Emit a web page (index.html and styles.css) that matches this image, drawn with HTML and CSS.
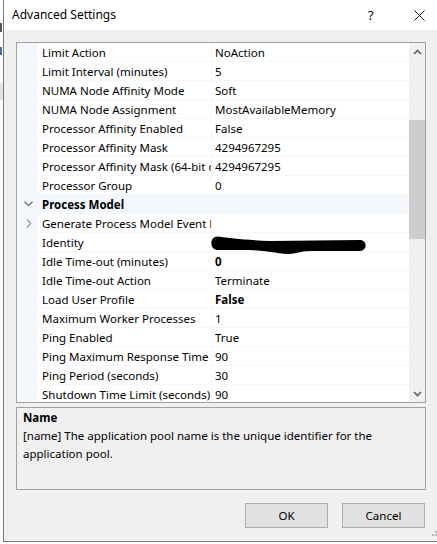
FILE: index.html
```html
<!DOCTYPE html>
<html>
<head>
<meta charset="utf-8">
<link rel="stylesheet" href="styles.css">
</head>
<body>
<div class="page">
  <div class="behind">
    <div class="frag frag-s"></div>
    <div class="frag frag-w"></div>
    <div class="frag frag-bar"></div>
  </div>
  <div class="dialog">
    <div class="titlebar">
      <div class="title">Advanced Settings</div>
      <div class="help">?</div>
      <div class="close">
        <svg width="11" height="11" viewBox="0 0 11 11"><path d="M0.5 0.5 L10.5 10.5 M10.5 0.5 L0.5 10.5" stroke="#111" stroke-width="1" fill="none"/></svg>
      </div>
    </div>
    <div class="content">
      <div class="grid">
        <div class="rows">
          <div class="row"><div class="margin"></div><div class="name">Limit Action</div><div class="value">NoAction</div></div>
          <div class="row"><div class="margin"></div><div class="name">Limit Interval (minutes)</div><div class="value">5</div></div>
          <div class="row"><div class="margin"></div><div class="name">NUMA Node Affinity Mode</div><div class="value">Soft</div></div>
          <div class="row"><div class="margin"></div><div class="name">NUMA Node Assignment</div><div class="value">MostAvailableMemory</div></div>
          <div class="row"><div class="margin"></div><div class="name">Processor Affinity Enabled</div><div class="value">False</div></div>
          <div class="row"><div class="margin"></div><div class="name">Processor Affinity Mask</div><div class="value">4294967295</div></div>
          <div class="row"><div class="margin"></div><div class="name">Processor Affinity Mask (64-bit option)</div><div class="value">4294967295</div></div>
          <div class="row"><div class="margin"></div><div class="name">Processor Group</div><div class="value">0</div></div>
          <div class="row category"><div class="margin">
            <svg width="9" height="6" viewBox="0 0 9 6"><path d="M0.5 0.8 L4.5 4.6 L8.5 0.8" stroke="#707070" stroke-width="1.3" fill="none"/></svg>
          </div><div class="cat-name">Process Model</div></div>
          <div class="row"><div class="margin">
            <svg width="6" height="9" viewBox="0 0 6 9"><path d="M1 0.5 L4.6 4.5 L1 8.5" stroke="#9a9a9a" stroke-width="1.3" fill="none"/></svg>
          </div><div class="name">Generate Process Model Event Log Entry</div><div class="value"></div></div>
          <div class="row"><div class="margin"></div><div class="name">Identity</div><div class="value identity">
            <svg class="scribble" width="158" height="20" viewBox="0 0 158 20"><path d="M8 0.5 C20 2 35 4 60 5 L150 4 C157 4 158 14 150 15 L100 15 C90 15 86 18 79 18 C70 18 60 15 40 14 L9 14 C-1 15 -1 0 8 0.5 Z" fill="#000"/></svg>
          </div></div>
          <div class="row"><div class="margin"></div><div class="name">Idle Time-out (minutes)</div><div class="value bold">0</div></div>
          <div class="row"><div class="margin"></div><div class="name">Idle Time-out Action</div><div class="value">Terminate</div></div>
          <div class="row"><div class="margin"></div><div class="name">Load User Profile</div><div class="value bold">False</div></div>
          <div class="row"><div class="margin"></div><div class="name">Maximum Worker Processes</div><div class="value">1</div></div>
          <div class="row"><div class="margin"></div><div class="name">Ping Enabled</div><div class="value">True</div></div>
          <div class="row"><div class="margin"></div><div class="name">Ping Maximum Response Time (seconds)</div><div class="value">90</div></div>
          <div class="row"><div class="margin"></div><div class="name">Ping Period (seconds)</div><div class="value">30</div></div>
          <div class="row"><div class="margin"></div><div class="name">Shutdown Time Limit (seconds)</div><div class="value">90</div></div>
        </div>
        <div class="scrollbar">
          <div class="sb-btn">
            <svg width="9" height="6" viewBox="0 0 9 6"><path d="M1 5 L4.5 1.5 L8 5" stroke="#606060" stroke-width="1.6" fill="none"/></svg>
          </div>
          <div class="thumb"></div>
          <div class="sb-fill"></div>
          <div class="sb-btn">
            <svg width="9" height="6" viewBox="0 0 9 6"><path d="M1 1 L4.5 4.5 L8 1" stroke="#606060" stroke-width="1.6" fill="none"/></svg>
          </div>
        </div>
      </div>
      <div class="desc">
        <div class="desc-title">Name</div>
        <div class="desc-text">[name] The application pool name is the unique identifier for the application pool.</div>
      </div>
      <div class="buttons">
        <button class="btn">OK</button>
        <button class="btn">Cancel</button>
      </div>
    </div>
    <div class="grip">
      <svg width="8" height="8" viewBox="0 0 8 8" fill="#b8b8b8"><rect x="6" y="0" width="2" height="2"/><rect x="3" y="3" width="2" height="2"/><rect x="6" y="3" width="2" height="2"/><rect x="0" y="6" width="2" height="2"/><rect x="3" y="6" width="2" height="2"/><rect x="6" y="6" width="2" height="2"/></svg>
    </div>
  </div>
</div>
</body>
</html>
```

FILE: styles.css
```css
html, body {
  margin: 0;
  padding: 0;
  background: #ffffff;
  overflow: hidden;
}
body {
  width: 437px;
  height: 544px;
  font-family: "Noto Sans", "Open Sans", sans-serif;
  font-size: 11.5px;
  color: #000;
}
.page {
  display: flex;
  width: 437px;
  height: 544px;
}
.behind {
  width: 3px;
  flex: none;
  display: flex;
  flex-direction: column;
  background: #fff;
}
.frag-s {
  margin-top: 23px;
  height: 9px;
  width: 2px;
  background: #555;
}
.frag-w {
  margin-top: 15px;
  height: 8px;
  width: 2px;
  background: #4a6da8;
}
.frag-bar {
  margin-top: 28px;
  height: 17px;
  width: 3px;
  background: #e3e3e3;
}
.dialog {
  position: relative;
  width: 440px;
  flex: none;
  height: 541px;
  border-left: 1px solid #7a7a7a;
  border-bottom: 1px solid #7a7a7a;
  background: #f0f0f0;
  display: flex;
  flex-direction: column;
}
.titlebar {
  height: 30px;
  background: #fff;
  display: flex;
  align-items: center;
  flex: none;
}
.title {
  padding-left: 8px;
  font-size: 12px;
  flex: 1;
  line-height: 30px;
}
.help {
  width: 10px;
  font-size: 13px;
  margin-right: 36px;
  line-height: 30px;
}
.close {
  width: 30px;
  display: flex;
  align-items: center;
  padding-top: 1px;
}
.content {
  padding: 12px 0 0 12px;
  display: flex;
  flex-direction: column;
}
.grid {
  width: 408px;
  height: 359px;
  border: 1px solid #a0a0a0;
  background: #fff;
  display: flex;
  overflow: hidden;
}
.rows {
  width: 392px;
  display: flex;
  flex-direction: column;
}
.row {
  display: flex;
  height: 18px;
  flex: none;
  border-bottom: 1px solid #f4f7fc;
  line-height: 17px;
}
.margin {
  width: 21px;
  flex: none;
  background: #f4f7fc;
  display: flex;
  align-items: center;
  justify-content: center;
  padding-left: 2px;
  box-sizing: border-box;
}
.name {
  width: 174px;
  flex: none;
  padding-left: 4px;
  padding-top: 1px;
  box-sizing: border-box;
  white-space: nowrap;
  overflow: hidden;
  border-right: 1px solid #f4f7fc;
}
.value {
  flex: 1;
  padding-left: 3px;
  padding-top: 1px;
  white-space: nowrap;
  overflow: visible;
  position: relative;
}
.bold {
  font-weight: bold;
}
.category {
  background: #f4f7fc;
}
.cat-name {
  flex: 1;
  padding-left: 4px;
  padding-top: 1px;
  font-weight: bold;
}
.scribble {
  position: absolute;
  left: -2px;
  top: 3px;
}
.scrollbar {
  width: 16px;
  flex: none;
  background: #f0f0f0;
  display: flex;
  flex-direction: column;
}
.sb-btn {
  height: 17px;
  display: flex;
  align-items: center;
  justify-content: center;
  flex: none;
}
.thumb {
  margin-top: 60px;
  height: 119px;
  background: #cdcdcd;
  flex: none;
}
.sb-fill {
  flex: 1;
}
.desc {
  margin-top: 4px;
  width: 402px;
  height: 81px;
  border: 1px solid #a0a0a0;
  padding: 0 0 0 6px;
  line-height: 18px;
}
.desc-title {
  font-weight: bold;
  padding-top: 1px;
}
.desc-text {
  padding-right: 10px;
}
.buttons {
  margin-top: 13px;
  width: 409px;
  display: flex;
  justify-content: flex-end;
  gap: 14px;
}
.btn {
  width: 83px;
  height: 25px;
  border: 1px solid #adadad;
  background: #e1e1e1;
  font-family: "Noto Sans", "Open Sans", sans-serif;
  font-size: 11.5px;
  color: #000;
  padding: 0;
  margin: 0;
}
.grip {
  position: absolute;
  left: 428px;
  bottom: 2px;
}
```
